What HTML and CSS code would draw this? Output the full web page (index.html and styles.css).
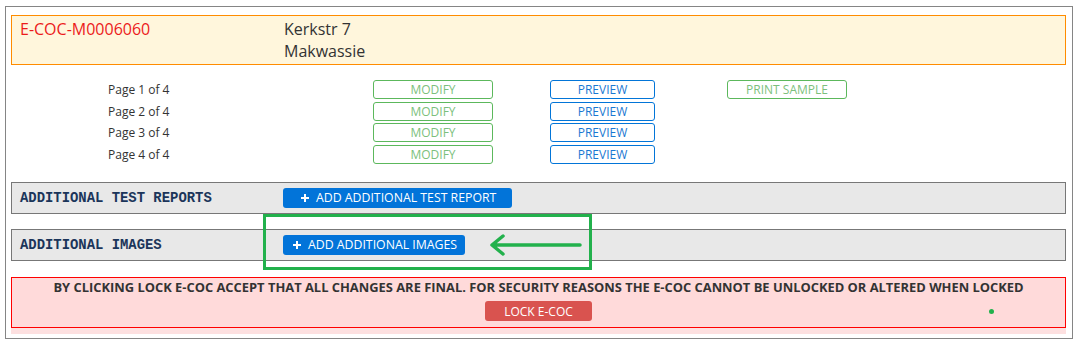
FILE: index.html
```html
<!DOCTYPE html>
<html lang="en">
<head>
    <meta charset="UTF-8">
    <title>E-COC M0006060</title>
    <link rel="stylesheet" href="styles.css">
</head>
<body>
    <div class="ecoc">
        <div class="ecoc-head">
            <div class="ecoc-id">E-COC-M0006060</div>
            <div class="ecoc-addr">Kerkstr 7<br>Makwassie</div>
        </div>

        <div class="pages">
            <span class="page-label">Page 1 of 4</span>
            <button class="btn btn-green">MODIFY</button>
            <button class="btn btn-blue">PREVIEW</button>
            <button class="btn btn-green btn-print">PRINT SAMPLE</button>

            <span class="page-label">Page 2 of 4</span>
            <button class="btn btn-green">MODIFY</button>
            <button class="btn btn-blue">PREVIEW</button>
            <span></span>

            <span class="page-label">Page 3 of 4</span>
            <button class="btn btn-green">MODIFY</button>
            <button class="btn btn-blue">PREVIEW</button>
            <span></span>

            <span class="page-label">Page 4 of 4</span>
            <button class="btn btn-green">MODIFY</button>
            <button class="btn btn-blue">PREVIEW</button>
            <span></span>
        </div>

        <div class="section-bar">
            <div class="section-title">ADDITIONAL TEST REPORTS</div>
            <button class="btn-add btn-add-wide">
                <svg class="plus" width="8" height="8" viewBox="0 0 8 8"><path d="M3 0h2v3h3v2H5v3H3V5H0V3h3z" fill="#fff"/></svg>ADD ADDITIONAL TEST REPORT
            </button>
        </div>

        <div class="section-bar">
            <div class="section-title">ADDITIONAL IMAGES</div>
            <button class="btn-add">
                <svg class="plus" width="8" height="8" viewBox="0 0 8 8"><path d="M3 0h2v3h3v2H5v3H3V5H0V3h3z" fill="#fff"/></svg>ADD ADDITIONAL IMAGES
            </button>
        </div>

        <div class="lock-box">
            <p>BY CLICKING LOCK E-COC ACCEPT THAT ALL CHANGES ARE FINAL. FOR SECURITY REASONS THE E-COC CANNOT BE UNLOCKED OR ALTERED WHEN LOCKED</p>
            <button class="btn-lock">LOCK E-COC</button>
        </div>

        <!-- annotation drawn over the screenshot -->
        <div class="callout">
            <svg class="arrow" width="100" height="24" viewBox="0 0 100 24">
                <path d="M4 12 H92 M4 12 L15 3 M4 12 L15 21" fill="none" stroke="#22b14c" stroke-width="3.5" stroke-linecap="round"/>
            </svg>
        </div>
        <div class="dot"></div>
    </div>
</body>
</html>
```

FILE: styles.css
```css
body {
    margin: 0;
    padding: 6px 6px 0 5px;
    font-family: "Open Sans", "Liberation Sans", sans-serif;
    color: #333;
    background: #fff;
}

.ecoc {
    position: relative;
    border: 1px solid #858585;
    padding: 8px 6px 3px 5px;
    min-height: 333px;
    box-sizing: border-box;
}

/* header */
.ecoc-head {
    display: flex;
    background: #fff6dc;
    border: 1px solid #ff8c00;
    padding: 2px 8px;
    line-height: 22px;
    font-size: 16px;
}

.ecoc-id {
    width: 264px;
    color: #ec1b1b;
}

.ecoc-addr {
    color: #333;
}

/* page rows */
.pages {
    display: grid;
    grid-template-columns: 362px 177px 177px 120px;
    row-gap: 2.6px;
    margin-top: 15px;
    align-items: center;
}

.page-label {
    padding-left: 97px;
    font-size: 12px;
}

.btn {
    height: 19px;
    padding: 0;
    background: #fff;
    border-radius: 3px;
    font-family: "Open Sans", "Liberation Sans", sans-serif;
    font-size: 12px;
    line-height: 17px;
    cursor: pointer;
}

.btn-green {
    width: 120px;
    border: 1px solid #5cb85c;
    color: #7cbf7c;
}

.btn-blue {
    width: 105px;
    border: 1px solid #0275d8;
    color: #1a78d2;
}

/* section bars */
.section-bar {
    display: flex;
    align-items: center;
    height: 32px;
    box-sizing: border-box;
    background: #e8e8e8;
    border: 1px solid #777;
    margin-top: 15px;
}

.pages + .section-bar {
    margin-top: 18px;
}

.section-title {
    width: 271px;
    padding-left: 8px;
    box-sizing: border-box;
    font-family: "Liberation Mono", "DejaVu Sans Mono", monospace;
    font-weight: bold;
    font-size: 13.9px;
    color: #1b355a;
}

.btn-add {
    display: flex;
    align-items: center;
    height: 20px;
    padding: 0 8px 0 10px;
    border: none;
    border-radius: 3px;
    background: #0274d9;
    color: #fff;
    font-family: "Open Sans", "Liberation Sans", sans-serif;
    font-size: 12.3px;
    cursor: pointer;
}

.btn-add-wide {
    padding: 0 16px 0 18px;
}

.plus {
    margin-right: 7px;
    flex: none;
}

/* lock warning */
.lock-box {
    margin-top: 16px;
    background: #ffdada;
    border: 1px solid #f00;
    box-shadow: 0 6px 0 #fde0e0;
    text-align: center;
    padding: 0 0 6px;
}

.lock-box p {
    margin: 0 0 3px;
    font-size: 12.9px;
    font-weight: bold;
    line-height: 18px;
    color: #333;
}

.btn-lock {
    width: 107px;
    height: 20px;
    padding: 0;
    border: none;
    border-radius: 3px;
    background: #d9534f;
    color: #fff;
    font-family: "Open Sans", "Liberation Sans", sans-serif;
    font-size: 12px;
    cursor: pointer;
}

/* annotation overlay */
.callout {
    position: absolute;
    left: 257px;
    top: 207px;
    width: 329px;
    height: 56px;
    box-sizing: border-box;
    border: 3px solid #22b14c;
}

.arrow {
    position: absolute;
    left: 222px;
    top: 16px;
}

.dot {
    position: absolute;
    left: 983px;
    top: 302px;
    width: 5px;
    height: 5px;
    border-radius: 50%;
    background: #22b14c;
}
```
